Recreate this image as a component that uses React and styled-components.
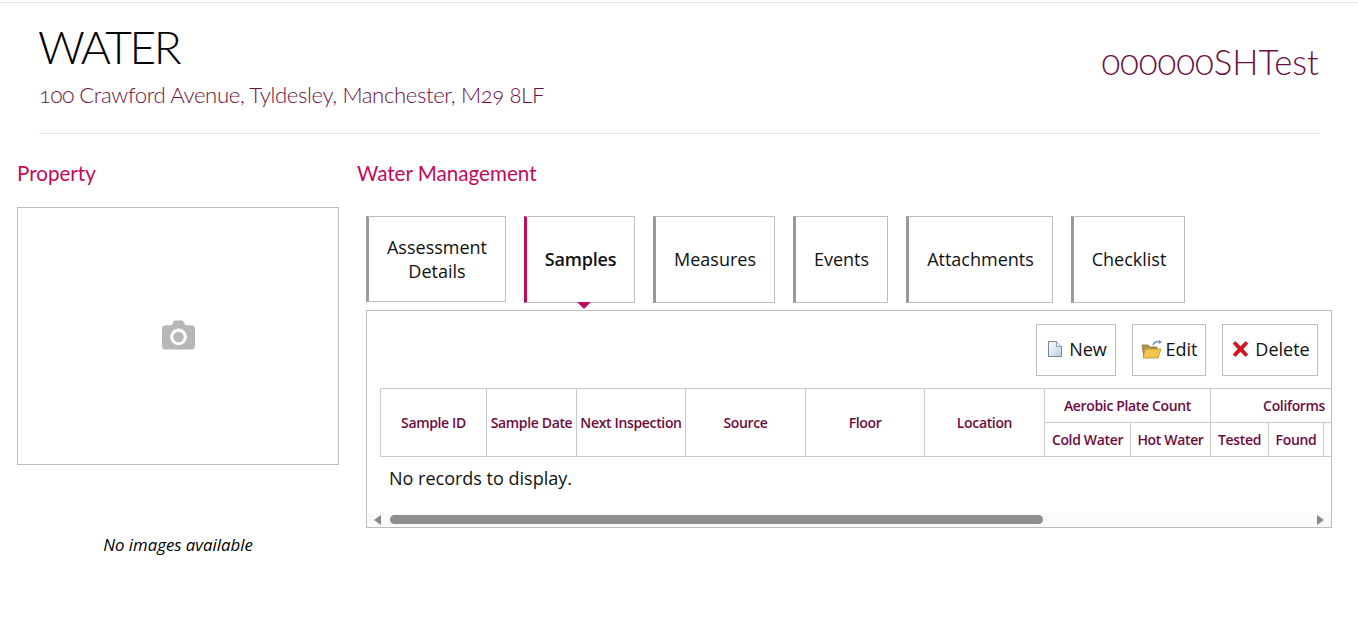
import styled, { createGlobalStyle } from "styled-components";

const GlobalStyle = createGlobalStyle`
  html, body {
    margin: 0;
    padding: 0;
    background: #fff;
    font-family: "Open Sans", sans-serif;
    color: #000;
  }
`;

const Page = styled.div`
  height: 627px;
  overflow: hidden;
  box-sizing: border-box;
  padding-top: 2px;
`;

const TopRule = styled.div`
  height: 1px;
  background: #e3e3e3;
`;

const Header = styled.header`
  margin: 0 39px;
  height: 131px;
  box-sizing: border-box;
  border-bottom: 1px solid #e3e3e3;
  display: flex;
  justify-content: space-between;
`;

const Title = styled.h1`
  margin: 19px 0 0 -1px;
  font: 300 46px/50px Lato, sans-serif;
  letter-spacing: -2.4px;
`;

const Address = styled.div`
  margin-top: 9px;
  font: 300 22.2px/28px Lato, sans-serif;
  font-variant-numeric: oldstyle-nums;
  color: #6b0f42;
  letter-spacing: -0.4px;
`;

const Reference = styled.div`
  margin-top: 38px;
  font: 300 34.7px/42px Lato, sans-serif;
  font-variant-numeric: oldstyle-nums;
  color: #6b0f42;
`;

const Columns = styled.div`
  display: flex;
  padding: 26px 26px 0 17px;
`;

const Left = styled.aside`
  width: 322px;
  margin-right: 18px;
  flex: none;
`;

const Right = styled.main`
  flex: 1;
  min-width: 0;
`;

const SectionTitle = styled.h2`
  margin: 0;
  font: 400 20.6px/26px Lato, sans-serif;
  color: #c00a5c;
`;

const PhotoBox = styled.div`
  margin-top: 21px;
  height: 258px;
  box-sizing: border-box;
  padding-bottom: 2px;
  border: 1px solid #bdbdbd;
  display: flex;
  align-items: center;
  justify-content: center;
`;

const Caption = styled.p`
  margin: 70px 0 0;
  text-align: center;
  font-size: 16.8px;
  line-height: 20px;
  font-style: italic;
`;

const Tabs = styled.nav`
  margin: 30px 0 0 9px;
  display: flex;
  align-items: flex-start;
`;

const Tab = styled.div`
  position: relative;
  box-sizing: border-box;
  width: ${(p) => p.$w}px;
  height: ${(p) => (p.$wrapped ? 86 : 87)}px;
  padding-bottom: ${(p) => (p.$wrapped ? 0 : 2)}px;
  margin-right: ${(p) => p.$gap}px;
  border: 1px solid #bdbdbd;
  border-left: 3px solid ${(p) => (p.$active ? "#c00a5c" : "#999")};
  display: flex;
  align-items: center;
  justify-content: center;
  text-align: center;
  font-size: 18px;
  line-height: 24px;
  font-weight: ${(p) => (p.$active ? 600 : 400)};
  letter-spacing: ${(p) => (p.$active ? "-0.2px" : "0")};
  color: #111;

  ${(p) =>
    p.$active &&
    `&::after {
      content: "";
      position: absolute;
      left: 50px;
      bottom: -7px;
      border: 7px solid transparent;
      border-bottom: 0;
      border-top-color: #c00a5c;
    }`}
`;

const Panel = styled.section`
  margin: 7px 0 0 9px;
  height: 218px;
  box-sizing: border-box;
  border: 1px solid #bdbdbd;
  display: flex;
  flex-direction: column;
  overflow: hidden;
`;

const Toolbar = styled.div`
  height: 77px;
  flex: none;
  box-sizing: border-box;
  padding: 13px 13px 0 0;
  display: flex;
  justify-content: flex-end;
  gap: 16px;
`;

const ToolButton = styled.div`
  box-sizing: border-box;
  width: ${(p) => p.$w}px;
  height: 52px;
  padding: 0 0 2px ${(p) => p.$shift || 0}px;
  border: 1px solid #bdbdbd;
  display: flex;
  align-items: center;
  justify-content: center;
  gap: ${(p) => p.$gap}px;
  font-size: 18px;
  color: #111;
`;

const TableWrap = styled.div`
  margin-left: 13px;
  overflow: hidden;
  flex: none;
`;

const Table = styled.table`
  border-collapse: collapse;
  table-layout: fixed;
  width: 973px;
  height: 69px;
`;

const Th = styled.th`
  border: 1px solid #c9c9c9;
  padding: 0;
  font-size: 14px;
  font-weight: 600;
  color: #6d0b3f;
  white-space: nowrap;
  overflow: hidden;
  letter-spacing: -0.35px;
  height: 33px;
`;

const ColiformsLabel = styled.span`
  display: block;
  text-align: right;
  padding-right: 28px;
`;

const Empty = styled.div`
  padding: 9px 0 0 22px;
  font-size: 18px;
  line-height: 24px;
  color: #111;
  height: 56px;
  box-sizing: border-box;
  flex: none;
`;

const ScrollBar = styled.div`
  height: 14px;
  flex: none;
  background: #fafafa;
  display: flex;
  align-items: center;
  padding: 0 7px;
  position: relative;
`;

const Arrow = styled.span`
  width: 0;
  height: 0;
  border: 5px solid transparent;
  ${(p) =>
    p.$right
      ? "border-right: 0; border-left: 7px solid #888; margin-left: auto;"
      : "border-left: 0; border-right: 7px solid #888;"}
`;

const Thumb = styled.div`
  position: absolute;
  left: 23px;
  top: 2px;
  width: 653px;
  height: 9px;
  border-radius: 5px;
  background: #8e8e8e;
`;

const CameraIcon = () => (
  <svg width="33" height="30" viewBox="0 0 34 30">
    <path
      d="M4 5h6l2-4a1.500 1.500 0 0 1 1-1h8a1.500 1.500 0 0 1 1 1l2 4h6a4 4 0 0 1 4 4v17a4 4 0 0 1-4 4H4a4 4 0 0 1-4-4V9a4 4 0 0 1 4-4z"
      fill="#b7b7b7"
    />
    <circle cx="17" cy="17" r="7" fill="none" stroke="#fff" strokeWidth="3.200" />
  </svg>
);

const NewIcon = () => (
  <svg width="16" height="18" viewBox="0 0 16 18">
    <defs>
      <linearGradient id="pg" x1="0" y1="0" x2="1" y2="1">
        <stop offset="0" stopColor="#fff" />
        <stop offset="1" stopColor="#b9cbe0" />
      </linearGradient>
    </defs>
    <path d="M1.500 1.500h8l5 5v10h-13z" fill="url(#pg)" stroke="#75859c" />
    <path d="M9.500 1.500v5h5" fill="#e8eef6" stroke="#8f9db1" />
  </svg>
);

const EditIcon = () => (
  <svg width="22" height="19" viewBox="0 0 22 19">
    <path d="M1 5h6l2 2h7v10H3z" fill="#b3934a" stroke="#8a7134" strokeWidth=".8" />
    <path d="M4 9h16l-3 9H2z" fill="#f3c64f" stroke="#b78f2c" strokeWidth=".8" />
    <path d="M12 5c1-3 4-4 7-3" fill="none" stroke="#6f93b8" strokeWidth="1.500" />
    <path d="M18 0l3 2-3 2z" fill="#6f93b8" />
  </svg>
);

const DeleteIcon = () => (
  <svg width="17" height="16" viewBox="0 0 17 16">
    <path
      d="M1 2.500 3.500.5 8.500 5.500 13.500.5 16 2.500 11 8l5 5.500-2.500 2-5-5-5 5L1 13.500 6 8z"
      fill="#d6141c"
      stroke="#a50f14"
      strokeWidth=".5"
    />
  </svg>
);

const tabs = [
  { label: "Assessment Details", w: 140, gap: 18, wrapped: true },
  { label: "Samples", w: 111, gap: 18, active: true },
  { label: "Measures", w: 122, gap: 18 },
  { label: "Events", w: 95, gap: 18 },
  { label: "Attachments", w: 147, gap: 18 },
  { label: "Checklist", w: 114, gap: 0 },
];

const columns = [106, 90, 109, 120, 119, 120, 86, 80, 58, 55, 30];

export default function App() {
  return (
    <>
      <GlobalStyle />
      <Page>
        <TopRule />
        <Header>
          <div>
            <Title>WATER</Title>
            <Address>100 Crawford Avenue, Tyldesley, Manchester, M29 8LF</Address>
          </div>
          <Reference>000000SHTest</Reference>
        </Header>
        <Columns>
          <Left>
            <SectionTitle>Property</SectionTitle>
            <PhotoBox>
              <CameraIcon />
            </PhotoBox>
            <Caption>No images available</Caption>
          </Left>
          <Right>
            <SectionTitle>Water Management</SectionTitle>
            <Tabs>
              {tabs.map((t) => (
                <Tab key={t.label} $w={t.w} $gap={t.gap} $wrapped={t.wrapped} $active={t.active}>
                  {t.label}
                </Tab>
              ))}
            </Tabs>
            <Panel>
              <Toolbar>
                <ToolButton $w={80} $gap={6} $shift={2}><NewIcon />New</ToolButton>
                <ToolButton $w={74} $gap={3}><EditIcon />Edit</ToolButton>
                <ToolButton $w={96} $gap={6} $shift={2}><DeleteIcon />Delete</ToolButton>
              </Toolbar>
              <TableWrap>
                <Table>
                  <colgroup>
                    {columns.map((w, i) => (
                      <col key={i} width={w} />
                    ))}
                  </colgroup>
                  <thead>
                    <tr>
                      <Th rowSpan={2}>Sample ID</Th>
                      <Th rowSpan={2}>Sample Date</Th>
                      <Th rowSpan={2}>Next Inspection</Th>
                      <Th rowSpan={2}>Source</Th>
                      <Th rowSpan={2}>Floor</Th>
                      <Th rowSpan={2}>Location</Th>
                      <Th colSpan={2}>Aerobic Plate Count</Th>
                      <Th colSpan={3}><ColiformsLabel>Coliforms</ColiformsLabel></Th>
                    </tr>
                    <tr>
                      <Th>Cold Water</Th>
                      <Th>Hot Water</Th>
                      <Th>Tested</Th>
                      <Th>Found</Th>
                      <Th />
                    </tr>
                  </thead>
                </Table>
              </TableWrap>
              <Empty>No records to display.</Empty>
              <ScrollBar>
                <Arrow />
                <Thumb />
                <Arrow $right />
              </ScrollBar>
            </Panel>
          </Right>
        </Columns>
      </Page>
    </>
  );
}
